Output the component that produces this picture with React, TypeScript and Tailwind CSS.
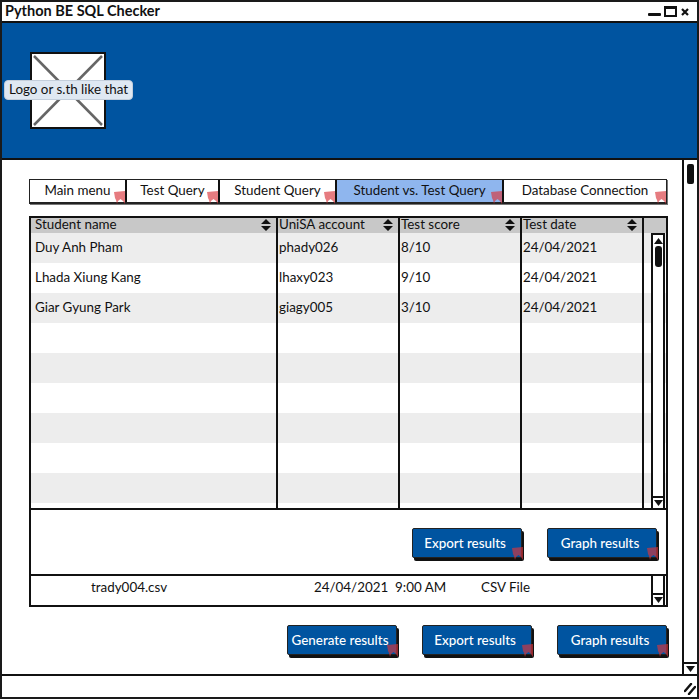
const students = [
	["Duy Anh Pham", "phady026", "8/10", "24/04/2021"],
	["Lhada Xiung Kang", "lhaxy023", "9/10", "24/04/2021"],
	["Giar Gyung Park", "giagy005", "3/10", "24/04/2021"],
	["", "", "", ""],
	["", "", "", ""],
	["", "", "", ""],
	["", "", "", ""],
	["", "", "", ""],
	["", "", "", ""]
];

const tabs = [
	{ label: "Main menu", width: "w-[97px]", active: false },
	{ label: "Test Query", width: "w-[93px]", active: false },
	{ label: "Student Query", width: "w-[117px]", active: false },
	{ label: "Student vs. Test Query", width: "w-[167px]", active: true },
	{ label: "Database Connection", width: "w-[162px]", active: false }
];

const columns = ["Student name", "UniSA account", "Test score", "Test date"];
const colWidths = ["w-[247px]", "w-[122px]", "w-[122px]", "w-[122px]"];

function Bookmark({ className }: { className: string }) {
	return (
		<svg className={`absolute h-[13px] w-[11px] ${className}`} viewBox="0 0 11 13" aria-hidden="true">
			<path d="M0 1 L11 0 L11 13 L9 10 L6.5 8 L4 10 L3 13 L2 9 L1 7 Z" fill="#d8363c" fillOpacity="0.65" />
		</svg>
	);
}

function SortIcon() {
	return (
		<svg className="h-[12px] w-[10px] shrink-0" viewBox="0 0 10 12" aria-hidden="true">
			<path d="M5 0 L10 5 L0 5 Z M0 7 L10 7 L5 12 Z" fill="#111" />
		</svg>
	);
}

function ArrowBox({ up, className }: { up: boolean; className: string }) {
	return (
		<div className={`flex h-[12px] w-full shrink-0 items-center justify-center border-[#111] bg-white ${className}`}>
			<svg className="h-[6px] w-[9px]" viewBox="0 0 9 6" aria-hidden="true">
				<path d={up ? "M4.5 0 L9 6 L0 6 Z" : "M0 0 L9 0 L4.5 6 Z"} fill="#111" />
			</svg>
		</div>
	);
}

function BlueButton({ label }: { label: string }) {
	return (
		<button className="relative flex h-[30px] w-[110px] items-center justify-center rounded-[2px] border-[1.5px] border-[#222] bg-[#0054a0] pr-[4px] text-[13.4px] font-medium text-white shadow-[2px_3px_0_#111]">
			{label}
			<Bookmark className="-right-[2px] -bottom-[3px]" />
		</button>
	);
}

export default function App() {
	return (
		<div className="flex h-[699px] w-[699px] flex-col border-2 border-[#1a1a1a] bg-white font-['Lato','Liberation_Sans',sans-serif] text-[#111]">
			<div className="relative flex h-[21px] shrink-0 items-center border-b-[2px] border-[#111] pl-[3px]">
				<span className="text-[14.5px] leading-none font-bold">Python BE SQL Checker</span>
				<div className="absolute top-[11px] left-[646px] h-[3px] w-[13px] rounded-[1px] bg-[#111]" />
				<div className="absolute top-[4px] left-[662px] h-[11px] w-[13px] border-2 border-t-[3px] border-[#111]" />
				<svg className="absolute top-[6px] left-[679px] h-[8px] w-[8px]" viewBox="0 0 8 8" aria-hidden="true">
					<path d="M1 1 L7 7 M7 1 L1 7" stroke="#111" strokeWidth="2.2" fill="none" />
				</svg>
			</div>

			<div className="relative h-[137px] shrink-0 border-b-[2px] border-[#111] bg-[#0054a0]">
				<div className="mt-[29px] ml-[28px] h-[77px] w-[76px] border-[2px] border-[#111] bg-white">
					<svg className="h-full w-full" viewBox="0 0 72 73" aria-hidden="true">
						<path d="M2 2 L70 71 M70 2 L2 71" stroke="#666" strokeWidth="2.5" fill="none" />
					</svg>
				</div>
				<div className="absolute top-[57px] left-[2px] rounded-[4px] border border-[#c3cedb] bg-[#dfe8f2] px-[4px] pb-[2px] text-[13.4px] leading-[16px]">
					Logo or s.th like that
				</div>
			</div>

			<div className="flex min-h-0 flex-1">
				<div className="min-w-0 flex-1 pt-[19px] pl-[27px]">
					<div className="relative flex h-[25px] w-[638px] border-[1.5px] border-b-[2.5px] border-[#222] shadow-[1px_1px_0_#777]">
						{tabs.map((tab, index) => (
							<div key={tab.label} className={`relative flex items-center justify-center pb-[2px] text-[13.4px] ${tab.width} ${tab.active ? "bg-[#8fb6ee]" : "bg-white"} ${index < tabs.length - 1 ? "border-r-2 border-[#111]" : ""}`}>
								{tab.label}
								<Bookmark className="right-0 -bottom-[2px]" />
							</div>
						))}
					</div>

					<div className="mt-[12px] w-[639px] border-2 border-[#111]">
						<div className="relative">
							<div className="flex h-[15px] bg-[#c8c8c8]">
								{columns.map((col, i) => (
									<div key={col} className={`flex items-center justify-between border-r-2 border-[#111] pr-[5px] pb-[1px] text-[13.4px] leading-none ${colWidths[i]} ${i === 0 ? "pl-[4px]" : "pl-[1px]"}`}>
										{col}
										<SortIcon />
									</div>
								))}
							</div>
							{students.map((row, r) => (
								<div key={r} className={`flex h-[30px] ${r % 2 === 0 ? "bg-[#ededed]" : "bg-white"}`}>
									{row.map((cell, i) => (
										<div key={i} className={`flex items-center border-r-2 border-[#111] text-[13.4px] leading-none ${colWidths[i]} ${i === 0 ? "pl-[4px]" : "pl-[1px]"}`}>
											{cell}
										</div>
									))}
								</div>
							))}
							<div className="flex h-[5px]">
								{colWidths.map((w, i) => (
									<div key={i} className={`border-r-2 border-[#111] ${w}`} />
								))}
							</div>
							<div className="absolute top-[15px] right-px bottom-0 flex w-[14px] flex-col items-center border-2 border-b-0 border-[#111] bg-white">
								<ArrowBox up className="" />
								<div className="-mt-px h-[21px] w-[7px] rounded-[3px] bg-[#111]" />
								<ArrowBox up={false} className="mt-auto border-t-2" />
							</div>
						</div>
					</div>

					<div className="flex h-[66px] w-[639px] items-center justify-end gap-[25px] border-r-2 border-b-2 border-l-2 border-[#111] pt-[2px] pr-[9px]">
						<BlueButton label="Export results" />
						<BlueButton label="Graph results" />
					</div>

					<div className="relative flex h-[31px] w-[639px] border-r-2 border-b-2 border-l-2 border-[#111] text-[13.4px]">
						<span className="mt-[1px] ml-[60px] w-[223px]">trady004.csv</span>
						<span className="mt-[1px] w-[167px]">24/04/2021 &nbsp;9:00 AM</span>
						<span className="mt-[1px]">CSV File</span>
						<div className="absolute top-0 right-px bottom-0 flex w-[14px] flex-col border-x-2 border-[#111]">
							<ArrowBox up={false} className="mt-auto border-t-2" />
						</div>
					</div>

					<div className="mt-[18px] flex w-[639px] justify-end gap-[25px] pr-[1px]">
						<BlueButton label="Generate results" />
						<BlueButton label="Export results" />
						<BlueButton label="Graph results" />
					</div>
				</div>

				<div className="flex w-[15px] shrink-0 flex-col items-center border-l-2 border-[#111]">
					<div className="mt-[4px] h-[20px] w-[7px] rounded-[2px] bg-[#111]" />
					<ArrowBox up={false} className="mt-auto border-t-2" />
				</div>
			</div>

			<div className="relative h-[23px] shrink-0 border-t-2 border-[#111]">
				<svg className="absolute right-[1px] bottom-[2px] h-[12px] w-[12px]" viewBox="0 0 12 12" aria-hidden="true">
					<path d="M1 8 L7 1 M5 11 L11 4" stroke="#111" strokeWidth="2.4" strokeLinecap="round" fill="none" />
				</svg>
			</div>
		</div>
	);
}
